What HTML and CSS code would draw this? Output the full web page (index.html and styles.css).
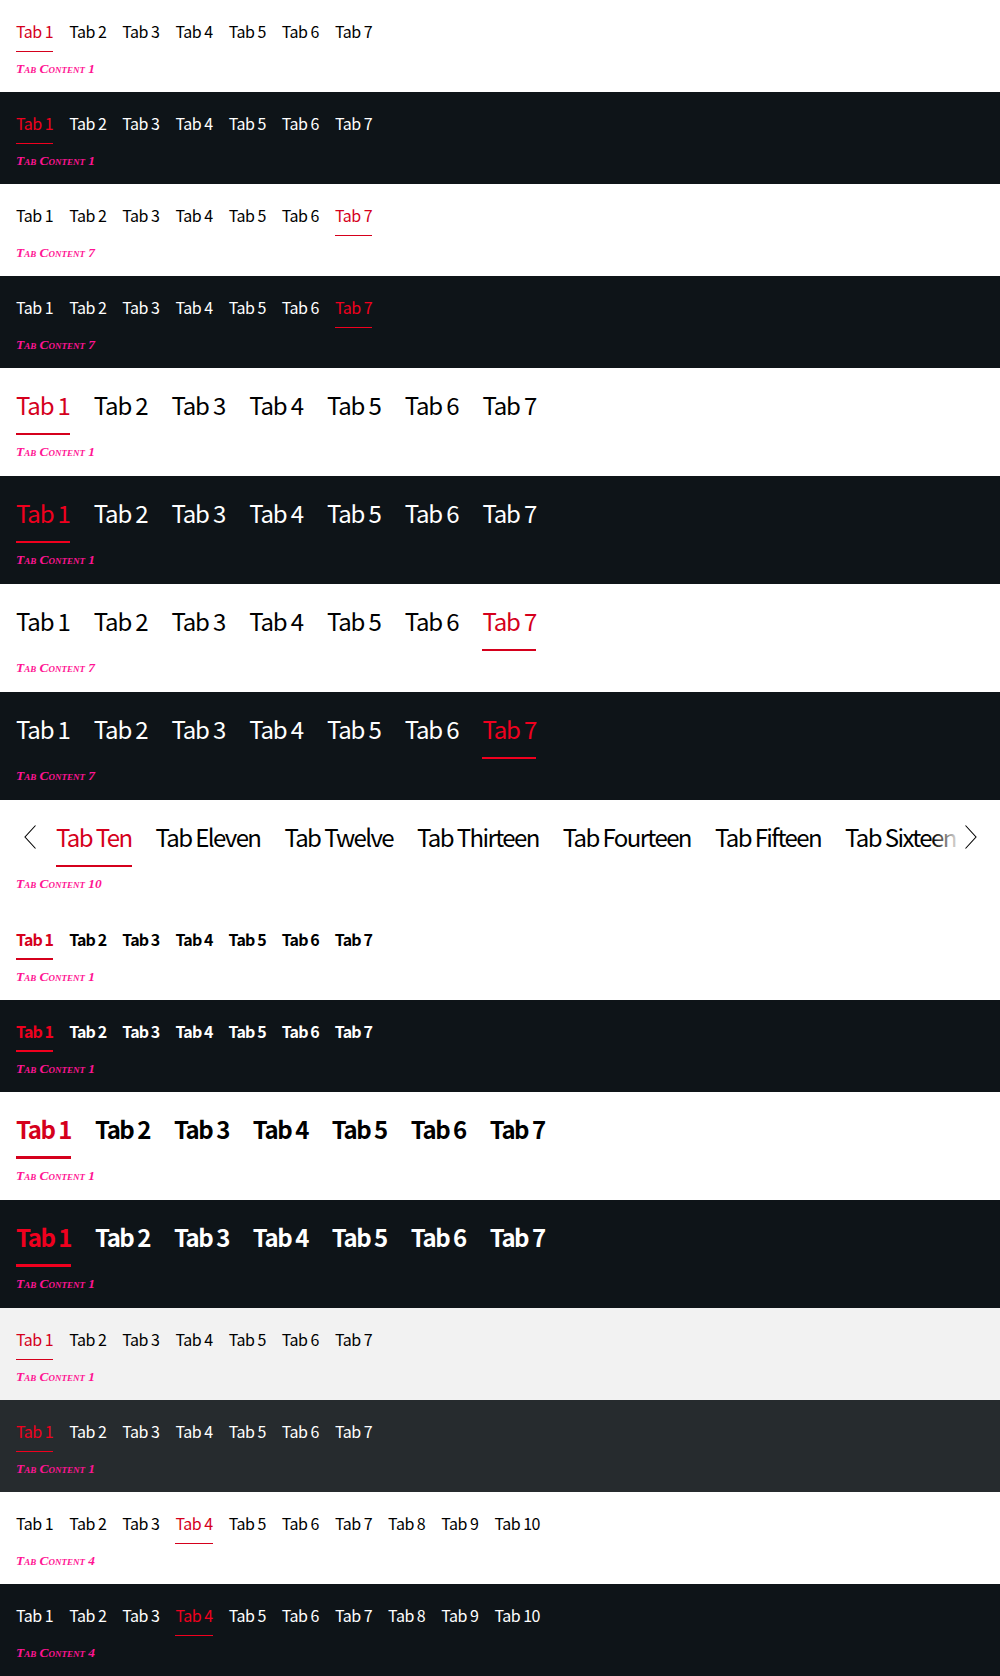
FILE: index.html
```html
<!DOCTYPE html>
<html lang="en">
<head>
<meta charset="utf-8">
<title>Tabs</title>
<link rel="stylesheet" href="styles.css">
</head>
<body>

<section class="tabs light">
  <div class="bar">
    <button class="tab active">Tab 1</button><button class="tab">Tab 2</button><button class="tab">Tab 3</button><button class="tab">Tab 4</button><button class="tab">Tab 5</button><button class="tab">Tab 6</button><button class="tab">Tab 7</button>
  </div>
  <p class="content">Tab Content 1</p>
</section>

<section class="tabs dark">
  <div class="bar">
    <button class="tab active">Tab 1</button><button class="tab">Tab 2</button><button class="tab">Tab 3</button><button class="tab">Tab 4</button><button class="tab">Tab 5</button><button class="tab">Tab 6</button><button class="tab">Tab 7</button>
  </div>
  <p class="content">Tab Content 1</p>
</section>

<section class="tabs light">
  <div class="bar">
    <button class="tab">Tab 1</button><button class="tab">Tab 2</button><button class="tab">Tab 3</button><button class="tab">Tab 4</button><button class="tab">Tab 5</button><button class="tab">Tab 6</button><button class="tab active">Tab 7</button>
  </div>
  <p class="content">Tab Content 7</p>
</section>

<section class="tabs dark">
  <div class="bar">
    <button class="tab">Tab 1</button><button class="tab">Tab 2</button><button class="tab">Tab 3</button><button class="tab">Tab 4</button><button class="tab">Tab 5</button><button class="tab">Tab 6</button><button class="tab active">Tab 7</button>
  </div>
  <p class="content">Tab Content 7</p>
</section>

<section class="tabs light medium">
  <div class="bar">
    <button class="tab active">Tab 1</button><button class="tab">Tab 2</button><button class="tab">Tab 3</button><button class="tab">Tab 4</button><button class="tab">Tab 5</button><button class="tab">Tab 6</button><button class="tab">Tab 7</button>
  </div>
  <p class="content">Tab Content 1</p>
</section>

<section class="tabs dark medium">
  <div class="bar">
    <button class="tab active">Tab 1</button><button class="tab">Tab 2</button><button class="tab">Tab 3</button><button class="tab">Tab 4</button><button class="tab">Tab 5</button><button class="tab">Tab 6</button><button class="tab">Tab 7</button>
  </div>
  <p class="content">Tab Content 1</p>
</section>

<section class="tabs light medium">
  <div class="bar">
    <button class="tab">Tab 1</button><button class="tab">Tab 2</button><button class="tab">Tab 3</button><button class="tab">Tab 4</button><button class="tab">Tab 5</button><button class="tab">Tab 6</button><button class="tab active">Tab 7</button>
  </div>
  <p class="content">Tab Content 7</p>
</section>

<section class="tabs dark medium">
  <div class="bar">
    <button class="tab">Tab 1</button><button class="tab">Tab 2</button><button class="tab">Tab 3</button><button class="tab">Tab 4</button><button class="tab">Tab 5</button><button class="tab">Tab 6</button><button class="tab active">Tab 7</button>
  </div>
  <p class="content">Tab Content 7</p>
</section>

<section class="tabs light medium scroll">
  <div class="scroller">
    <button class="nav prev" aria-label="Previous">
      <svg width="12" height="24" viewBox="0 0 12 24" aria-hidden="true"><path d="M11.5 0.5 L1 12 L11.5 23.5" fill="none" stroke="currentColor" stroke-width="1.1"/></svg>
    </button>
    <div class="bar">
      <button class="tab active">Tab Ten</button><button class="tab">Tab Eleven</button><button class="tab">Tab Twelve</button><button class="tab">Tab Thirteen</button><button class="tab">Tab Fourteen</button><button class="tab">Tab Fifteen</button><button class="tab">Tab Sixteen</button>
    </div>
    <div class="nav next">
      <svg width="12" height="24" viewBox="0 0 12 24" aria-hidden="true"><path d="M0.5 0.5 L11 12 L0.5 23.5" fill="none" stroke="currentColor" stroke-width="1.1"/></svg>
    </div>
  </div>
  <p class="content">Tab Content 10</p>
</section>

<section class="tabs light bold">
  <div class="bar">
    <button class="tab active">Tab 1</button><button class="tab">Tab 2</button><button class="tab">Tab 3</button><button class="tab">Tab 4</button><button class="tab">Tab 5</button><button class="tab">Tab 6</button><button class="tab">Tab 7</button>
  </div>
  <p class="content">Tab Content 1</p>
</section>

<section class="tabs dark bold">
  <div class="bar">
    <button class="tab active">Tab 1</button><button class="tab">Tab 2</button><button class="tab">Tab 3</button><button class="tab">Tab 4</button><button class="tab">Tab 5</button><button class="tab">Tab 6</button><button class="tab">Tab 7</button>
  </div>
  <p class="content">Tab Content 1</p>
</section>

<section class="tabs light medium bold">
  <div class="bar">
    <button class="tab active">Tab 1</button><button class="tab">Tab 2</button><button class="tab">Tab 3</button><button class="tab">Tab 4</button><button class="tab">Tab 5</button><button class="tab">Tab 6</button><button class="tab">Tab 7</button>
  </div>
  <p class="content">Tab Content 1</p>
</section>

<section class="tabs dark medium bold">
  <div class="bar">
    <button class="tab active">Tab 1</button><button class="tab">Tab 2</button><button class="tab">Tab 3</button><button class="tab">Tab 4</button><button class="tab">Tab 5</button><button class="tab">Tab 6</button><button class="tab">Tab 7</button>
  </div>
  <p class="content">Tab Content 1</p>
</section>

<section class="tabs surface-light">
  <div class="bar">
    <button class="tab active">Tab 1</button><button class="tab">Tab 2</button><button class="tab">Tab 3</button><button class="tab">Tab 4</button><button class="tab">Tab 5</button><button class="tab">Tab 6</button><button class="tab">Tab 7</button>
  </div>
  <p class="content">Tab Content 1</p>
</section>

<section class="tabs surface-dark">
  <div class="bar">
    <button class="tab active">Tab 1</button><button class="tab">Tab 2</button><button class="tab">Tab 3</button><button class="tab">Tab 4</button><button class="tab">Tab 5</button><button class="tab">Tab 6</button><button class="tab">Tab 7</button>
  </div>
  <p class="content">Tab Content 1</p>
</section>

<section class="tabs light">
  <div class="bar">
    <button class="tab">Tab 1</button><button class="tab">Tab 2</button><button class="tab">Tab 3</button><button class="tab active">Tab 4</button><button class="tab">Tab 5</button><button class="tab">Tab 6</button><button class="tab">Tab 7</button><button class="tab">Tab 8</button><button class="tab">Tab 9</button><button class="tab">Tab 10</button>
  </div>
  <p class="content">Tab Content 4</p>
</section>

<section class="tabs dark">
  <div class="bar">
    <button class="tab">Tab 1</button><button class="tab">Tab 2</button><button class="tab">Tab 3</button><button class="tab active">Tab 4</button><button class="tab">Tab 5</button><button class="tab">Tab 6</button><button class="tab">Tab 7</button><button class="tab">Tab 8</button><button class="tab">Tab 9</button><button class="tab">Tab 10</button>
  </div>
  <p class="content">Tab Content 4</p>
</section>

</body>
</html>
```

FILE: styles.css
```css
html, body {
  margin: 0;
  padding: 0;
}

body {
  background: #fff;
  font-family: "Noto Sans CJK JP", "Liberation Sans", Arial, sans-serif;
}

.tabs {
  padding: 19px 16px 13.5px;
}

.tabs.medium {
  padding: 18.5px 16px 14.5px;
}

.light { background: #fff; color: #000; }
.dark { background: #0e1418; color: #fff; }
.surface-light { background: #f2f2f2; color: #000; }
.surface-dark { background: #262b2e; color: #fff; }

.bar {
  display: flex;
  gap: 16px;
  white-space: nowrap;
}

.medium .bar {
  gap: 24px;
}

.tab {
  position: relative;
  flex: none;
  margin: 0;
  padding: 0 0 9px;
  border: 0;
  background: none;
  color: inherit;
  font-family: "Noto Sans CJK JP", "Liberation Sans", Arial, sans-serif;
  font-size: 16px;
  font-weight: 400;
  line-height: 24px;
  letter-spacing: -0.5px;
  text-align: left;
  cursor: pointer;
}

.medium .tab {
  font-size: 24px;
  line-height: 36px;
  padding-bottom: 12.5px;
  letter-spacing: -1.15px;
}

.scroll .tab {
  letter-spacing: -1.6px;
}

.bold .tab {
  font-weight: 700;
  letter-spacing: -0.9px;
}

.medium.bold .tab {
  letter-spacing: -1.5px;
}

.tab.active::after {
  content: "";
  position: absolute;
  left: 0;
  right: 0;
  bottom: 0;
  height: 1px;
  background: currentColor;
}

.medium .tab.active::after,
.bold .tab.active::after {
  height: 2px;
}

.medium.bold .tab.active::after {
  height: 3px;
}

.light .tab.active,
.surface-light .tab.active {
  color: #d5001c;
}

.dark .tab.active,
.surface-dark .tab.active {
  color: #f0001e;
}

.content {
  margin: 6.5px 0 0;
  font-family: "Liberation Serif", "Times New Roman", serif;
  font-size: 13.4px;
  font-style: italic;
  font-variant: small-caps;
  font-weight: 700;
  line-height: 20px;
  color: #ff1493;
}

/* scrolling tabs */
.scroller {
  position: relative;
  display: flex;
  overflow: hidden;
}

.scroller .bar {
  flex: none;
}

.nav {
  display: flex;
  align-items: flex-start;
  height: 36px;
  padding: 6px 0 0;
  border: 0;
  background: #fff;
  color: #000;
}

.prev {
  flex: none;
  width: 40px;
  padding-left: 8px;
  margin: 0;
}

.next {
  position: absolute;
  top: 0;
  right: 0;
  width: 52px;
  justify-content: flex-end;
  padding-right: 7px;
  box-sizing: border-box;
  background: linear-gradient(90deg, rgba(255, 255, 255, 0) 0%, #fff 55%);
}

.nav svg {
  display: block;
}
```
